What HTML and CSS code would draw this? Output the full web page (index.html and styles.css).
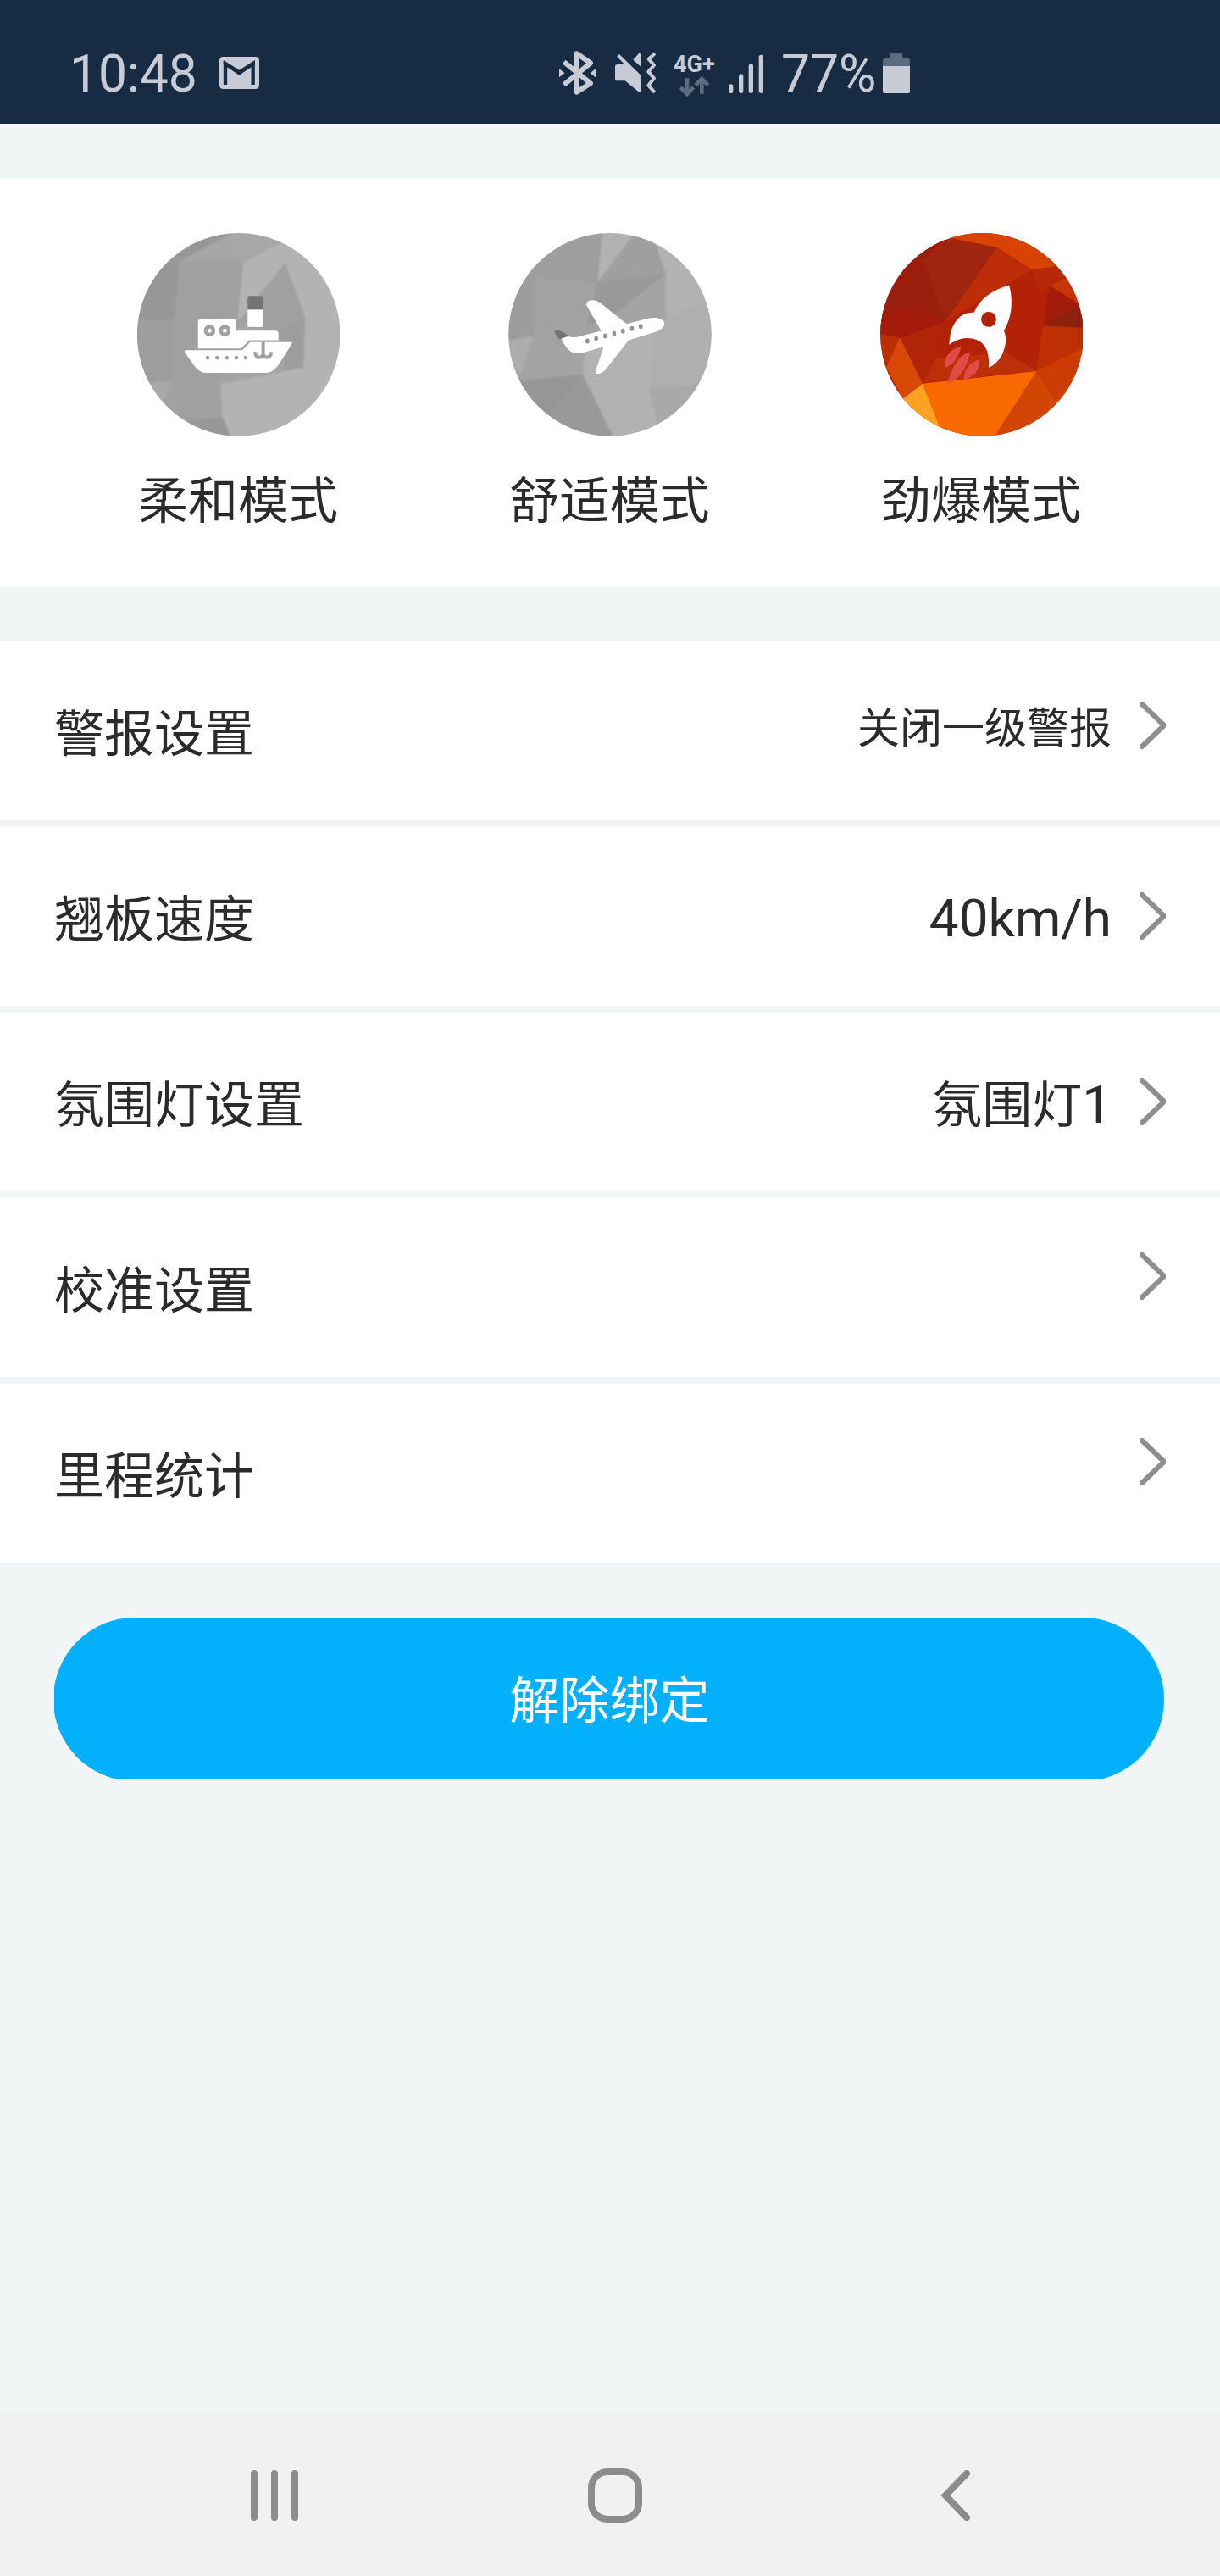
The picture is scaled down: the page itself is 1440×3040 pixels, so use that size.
FILE: index.html
```html
<!DOCTYPE html>
<html lang="zh-CN">
<head>
<meta charset="utf-8">
<title>设置</title>
<link rel="stylesheet" href="styles.css">
</head>
<body>
<header class="status">
  <span class="clock">10:48</span>
  <svg class="mail" viewBox="0 0 141 114" width="47" height="38">
    <rect width="141" height="114" rx="13" fill="#c6cbd5"/>
    <path d="M21 99V24L70 55L119 24V99" fill="none" stroke="#172b42" stroke-width="13"/>
    <path d="M14 14L70 52L126 14V28L70 65L14 28Z" fill="#172b42"/>
  </svg>
  <svg class="bt" viewBox="51 45 144 180" width="48" height="60">
    <path d="M77 99L171 175L122 206V70L171 103L77 180" fill="none" stroke="#c6cbd5" stroke-width="18" stroke-linejoin="round"/>
    <path d="M60 124L80 139L60 154ZM189 124L170 139L189 154Z" fill="#c6cbd5"/>
  </svg>
  <svg class="mute" viewBox="255 45 156 180" width="52" height="60">
    <path d="M264 80L273 72L350 147V200Q349 208 340 204L293 166H266Q258 166 258 158V116Q258 108 266 108H292ZM322 92L341 70Q350 66 350 74V117Z" fill="#c6cbd5"/>
    <path d="M399 69L377 89L396 111L376 134L396 157L376 182L398 207" fill="none" stroke="#c6cbd5" stroke-width="12" stroke-linejoin="round"/>
  </svg>
  <div class="net">
    <span class="net-name">4G+</span>
    <svg viewBox="480 148 114 78" width="38" height="26">
      <path d="M513 158V210M490 190L513 214L535 190M565 213V162M543 182L565 160L587 182" fill="none" stroke="#5c6c80" stroke-width="14"/>
    </svg>
  </div>
  <svg class="signal" viewBox="657 45 129 180" width="43" height="60">
    <path d="M668 186V202M704 150V202M739 114V202M775 82V202" fill="none" stroke="#c6cbd5" stroke-width="16" stroke-linecap="round"/>
  </svg>
  <span class="percent">77%</span>
  <svg class="battery" viewBox="1203 45 102 180" width="34" height="60">
    <path d="M1206 114V93Q1206 87 1212 87H1231V70Q1231 66 1235 66H1272Q1276 66 1276 70V87H1296Q1302 87 1302 93V114Z" fill="#5c6c80"/>
    <path d="M1206 114H1302V204Q1302 210 1296 210H1212Q1206 210 1206 204Z" fill="#c6cbd5"/>
  </svg>
</header>

<main class="page">
  <section class="modes">
    <div class="mode">
      <svg viewBox="36 44 717 718" width="239" height="239">
        <defs>
          <clipPath id="c1"><circle cx="395" cy="404" r="360"/></clipPath>
          <filter id="soft" x="-5%" y="-5%" width="110%" height="110%"><feGaussianBlur stdDeviation="3"/></filter>
        </defs>
        <g clip-path="url(#c1)"><g filter="url(#soft)">
          <rect x="10" y="20" width="770" height="770" fill="#a0a0a0"/>
          <path d="M10 20H400L185 150L165 350L10 350Z" fill="#979797"/>
          <path d="M370 48L540 80L412 145H185Z" fill="#a6a6a6"/>
          <path d="M370 20H560L540 82L412 147L370 60Z" fill="#a8a8a8"/>
          <path d="M10 350L160 352L163 570L10 580Z" fill="#9d9d9d"/>
          <path d="M80 575L163 568L125 650Z" fill="#a9a9a9"/>
          <path d="M163 570L330 580L338 695L180 720L125 640Z" fill="#a1a1a1"/>
          <path d="M180 714L338 695L372 790H180Z" fill="#979797"/>
          <path d="M412 147L540 82L570 20H790V790H380L338 695L330 580L625 520L630 340L560 150L390 362Z" fill="#b3b3b3"/>
          <path d="M560 150L630 345L540 395L390 362Z" fill="#a0a0a0"/>
          <path d="M390 362L540 395L630 350L625 520L330 578Z" fill="#a4a4a4"/>
          <path d="M540 395L630 350L625 520L560 530Z" fill="#9d9d9d"/>
        </g></g>
        <path d="M251 453V360Q251 349 262 349H376Q387 349 387 360V390H525Q536 390 536 401V424H432L404 453Z" fill="#fff"/>
        <path d="M207 459H408L436 431H580Q587 431 583 438L536 512Q516 540 490 540H280Q258 540 242 520L205 468Q201 459 207 459Z" fill="#fff"/>
        <rect x="427" y="315" width="54" height="62" fill="#fff"/>
        <path d="M427 315V272Q427 267 432 267H476Q481 267 481 272V315Z" fill="#737373"/>
        <g fill="#fff" stroke="#a0a0a0" stroke-width="13"><circle cx="292" cy="390" r="14"/><circle cx="346" cy="390" r="14"/></g>
        <g fill="#a0a0a0"><circle cx="285" cy="486" r="7"/><circle cx="319" cy="486" r="7"/><circle cx="353" cy="486" r="7"/><circle cx="387" cy="486" r="7"/><circle cx="420" cy="486" r="7"/></g>
        <path d="M482 431V478M454 465V471Q456 485 469 485Q480 484 482 472Q484 484 496 485Q508 484 510 471V465" fill="none" stroke="#a0a0a0" stroke-width="12"/>
      </svg>
      <span class="mode-name">柔和模式</span>
    </div>
    <div class="mode">
      <svg viewBox="42 44 720 718" width="240" height="239">
        <defs><clipPath id="c2"><circle cx="402" cy="404" r="360"/></clipPath></defs>
        <g clip-path="url(#c2)"><g filter="url(#soft)">
          <rect x="20" y="20" width="770" height="770" fill="#a2a2a2"/>
          <path d="M20 20H375L357 220L130 200L20 300Z" fill="#9e9e9e"/>
          <path d="M20 205H130V410L20 425Z" fill="#9c9c9c"/>
          <path d="M20 428L130 410L90 540L60 560Z" fill="#acacac"/>
          <path d="M378 20H510L357 221Z" fill="#b2b2b2"/>
          <path d="M485 50L560 70L600 190L357 221Z" fill="#9f9f9f"/>
          <path d="M600 190L357 221L320 370L400 350Z" fill="#999"/>
          <path d="M600 190L400 345L465 380L600 350Z" fill="#a4a4a4"/>
          <path d="M560 70L790 200V790H425L305 545L310 470L600 350V190Z" fill="#b2b2b2"/>
          <path d="M605 340L790 270V580L540 597L560 400Z" fill="#afafaf"/>
          <path d="M540 597L790 576V790H585Z" fill="#a9a9a9"/>
          <path d="M20 574L305 545L425 790H20Z" fill="#999"/>
          <path d="M20 574L305 545L190 690Z" fill="#969696"/>
          <path d="M90 565L130 410L300 480L305 545Z" fill="#a4a4a4"/>
        </g></g>
        <path d="M229 416L254 410Q272 418 300 408L371 391L319 301Q316 291 326 284Q350 278 366 290L461 366L540 346Q588 339 595 364Q595 382 568 393L468 424L385 530Q372 545 351 542Q350 535 355 522L379 447L300 470Q270 474 255 458Q240 444 229 416Z" fill="#fff"/>
        <path d="M206 393Q210 386 222 390Q240 395 254 410L222 421Q210 410 206 393Z" fill="#737373"/>
        <g fill="#929292"><ellipse cx="322" cy="427" rx="7" ry="9"/><ellipse cx="353" cy="418" rx="7" ry="9"/><ellipse cx="385" cy="409" rx="7" ry="9"/><ellipse cx="417" cy="401" rx="7" ry="9"/><ellipse cx="448" cy="392" rx="7" ry="9"/><ellipse cx="480" cy="383" rx="7" ry="9"/><ellipse cx="511" cy="375" rx="7" ry="9"/></g>
      </svg>
      <span class="mode-name">舒适模式</span>
    </div>
    <div class="mode">
      <svg viewBox="39 44 717 718" width="239" height="239">
        <defs><clipPath id="c3"><circle cx="399" cy="404" r="360"/></clipPath></defs>
        <g clip-path="url(#c3)">
          <rect x="30" y="40" width="735" height="730" fill="#b32106"/>
          <path d="M30 40H300L190 140L270 358L110 415L30 400Z" fill="#9b1d0c"/>
          <path d="M290 62L452 94L270 358L190 140Z" fill="#a0250e"/>
          <path d="M30 340L150 315L270 358L110 415L30 400Z" fill="#a41b0b"/>
          <path d="M280 40H560L700 160L575 174L452 94L290 62Z" fill="#d84204"/>
          <path d="M452 94L575 174L490 225L270 358Z" fill="#bd2d07"/>
          <path d="M575 174L660 162L710 205L640 232L605 260Z" fill="#b52906"/>
          <path d="M640 232L705 200L770 310Z" fill="#c93605"/>
          <path d="M640 232L745 300L615 372Z" fill="#a21b0b"/>
          <path d="M615 372L745 300L770 380Z" fill="#8d210b"/>
          <path d="M615 372L770 381V450L592 532Z" fill="#bf2f05"/>
          <path d="M592 532L770 445V560L660 640Z" fill="#cd3b04"/>
          <path d="M592 532L660 640L560 770H435Z" fill="#d24605"/>
          <path d="M660 640L770 520V770H540Z" fill="#d44704"/>
          <path d="M110 415L270 358L230 520L188 576Z" fill="#b02507"/>
          <path d="M188 576L235 490L480 465L592 532Z" fill="#bd2f06"/>
          <path d="M30 400L108 415L60 540Z" fill="#bd2d06"/>
          <path d="M108 415L188 576L120 635L60 520Z" fill="#d84806"/>
          <path d="M188 578L592 534L440 770H260Z" fill="#f96902"/>
          <path d="M188 578L250 735L120 720V632Z" fill="#fea321"/>
        </g>
        <path d="M496 229Q518 320 477 391Q494 430 466 484Q445 513 423 521Q430 410 335 417Q308 421 283 440Q285 370 323 339Q350 323 371 326Q398 257 496 229Z" fill="#fff"/>
        <circle cx="423" cy="350" r="27" fill="#b2210a"/>
        <path d="M326 446Q265 460 267 521Q309 512 326 446ZM357 466Q301 480 277 579Q340 554 357 466ZM389 492Q335 511 334 564Q393 548 389 492Z" fill="#e24a47"/>
      </svg>
      <span class="mode-name">劲爆模式</span>
    </div>
  </section>

  <section class="list">
    <div class="row">
      <span class="label">警报设置</span>
      <span class="value small">关闭一级警报</span>
      <svg class="chevron up" viewBox="0 0 31 56" width="31" height="56"><path d="M3 3L29 28L3 53"/></svg>
    </div>
    <div class="row">
      <span class="label">翘板速度</span>
      <span class="value speed latin">40km/h</span>
      <svg class="chevron" viewBox="0 0 31 56" width="31" height="56"><path d="M3 3L29 28L3 53"/></svg>
    </div>
    <div class="row">
      <span class="label">氛围灯设置</span>
      <span class="value">氛围灯<span class="latin">1</span></span>
      <svg class="chevron" viewBox="0 0 31 56" width="31" height="56"><path d="M3 3L29 28L3 53"/></svg>
    </div>
    <div class="row">
      <span class="label">校准设置</span>
      <svg class="chevron bare" viewBox="0 0 31 56" width="31" height="56"><path d="M3 3L29 28L3 53"/></svg>
    </div>
    <div class="row">
      <span class="label">里程统计</span>
      <svg class="chevron bare" viewBox="0 0 31 56" width="31" height="56"><path d="M3 3L29 28L3 53"/></svg>
    </div>
  </section>

  <div class="action"><button class="unbind" type="button">解除绑定</button></div>
</main>

<nav class="nav">
  <svg viewBox="0 0 56 60" width="56" height="60"><path d="M4 4V56M28 4V56M52 4V56" fill="none" stroke="#8c8c8c" stroke-width="8" stroke-linecap="round"/></svg>
  <svg class="home" viewBox="0 0 64 64" width="64" height="64"><rect x="4" y="4" width="56" height="56" rx="19" fill="none" stroke="#8c8c8c" stroke-width="8"/></svg>
  <svg class="back" viewBox="0 0 36 60" width="36" height="60"><path d="M31 4L6 30L31 56" fill="none" stroke="#8c8c8c" stroke-width="8" stroke-linecap="round"/></svg>
</nav>
</body>
</html>
```
FILE: styles.css
```css
* { box-sizing: border-box; }

body {
  margin: 0;
  width: 1440px;
  height: 3040px;
  display: flex;
  flex-direction: column;
  background: #f1f5f6;
  color: #2b2b2b;
  font-family: Roboto, "Noto Sans CJK SC", sans-serif;
  font-size: 59px;
  overflow: hidden;
}

svg { display: block; flex: none; }

.status {
  height: 146px;
  flex: none;
  display: flex;
  align-items: flex-start;
  padding: 55px 0 0 82px;
  background: #172b42;
  color: #c6cbd5;
  font-size: 60.5px;
  line-height: 66px;
  white-space: nowrap;
}
.clock { width: 177px; }
.mail { margin: 12px 351px 0 0; }
.bt { margin-right: 20px; }
.mute { margin-right: 18px; }
.net { width: 50px; margin-right: 14px; }
.net-name { display: block; padding-top: 7px; font-size: 27px; font-weight: 700; line-height: 28px; }
.net svg { margin: -1px 0 0 5px; }
.signal { margin-right: 20px; }
.percent { width: 119px; }

.page { flex: 1; padding-top: 64px; }

.modes {
  height: 483px;
  padding: 65px 162px 0 161px;
  display: flex;
  justify-content: space-between;
  background: #fff;
}
.mode { width: 240px; display: flex; flex-direction: column; align-items: center; }
.mode-name { margin-top: 30px; line-height: 86px; font-family: "Noto Sans CJK SC", sans-serif; white-space: nowrap; }

.list { margin-top: 64px; display: flex; flex-direction: column; gap: 8px; }
.row {
  height: 211px;
  display: flex;
  align-items: flex-start;
  padding: 0 64px;
  background: #fff;
  line-height: 86px;
  font-family: "Noto Sans CJK SC", sans-serif;
}
.label { flex: 1; margin-top: 62px; }
.value { margin-top: 62px; }
.value.small { margin-top: 55px; font-size: 50px; }
.value.speed { margin-top: 65px; }
.latin { font-family: Roboto, sans-serif; font-size: 62px; }
.chevron { margin: 77px 0 0 33px; fill: none; stroke: #8e8e8e; stroke-width: 6; stroke-linecap: round; stroke-linejoin: round; }
.chevron.up { margin-top: 71px; }
.chevron.bare { margin-top: 64px; }

.action { width: 1310px; height: 191px; margin: 65px 0 0 64px; overflow: hidden; }
.unbind {
  display: block;
  width: 1311px;
  height: 193px;
  margin-left: -1px;
  padding: 0 0 6px 2px;
  border: 0;
  border-radius: 96px;
  background: #02b0fb;
  color: #fff;
  font: 59px/187px "Noto Sans CJK SC", sans-serif;
}

.nav {
  height: 192px;
  flex: none;
  display: flex;
  align-items: center;
  padding: 2px 0 0 296px;
  background: #f1f1f1;
}
.home { margin-left: 342px; }
.back { margin-left: 352px; }
```
